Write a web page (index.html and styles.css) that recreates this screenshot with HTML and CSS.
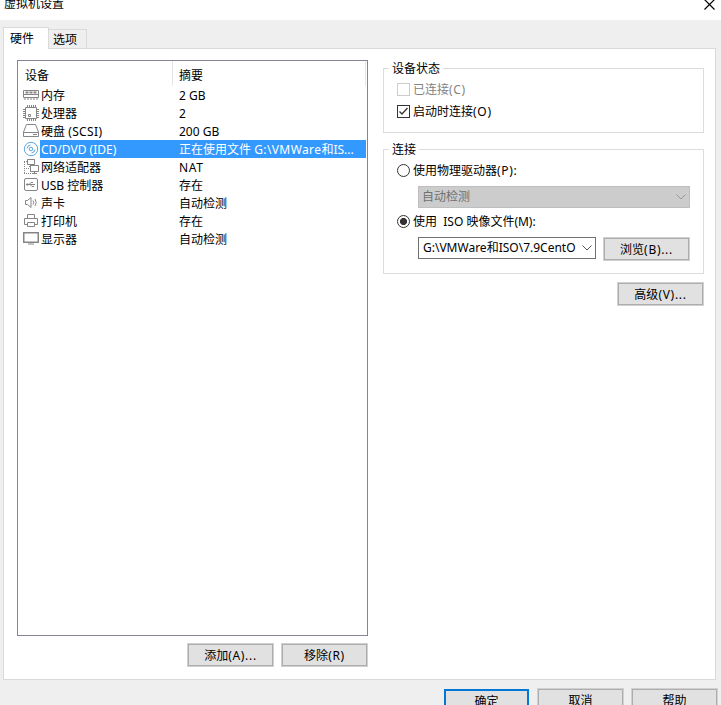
FILE: index.html
```html
<!DOCTYPE html>
<html lang="zh-CN">
<head>
  <meta charset="UTF-8" />
  <title>虚拟机设置</title>
  <link rel="stylesheet" href="styles.css">
</head>
<body>

  <header class="titlebar">
    <span class="title">虚拟机设置</span>
    <svg class="close" width="11" height="11" viewBox="0 0 11 11"><path d="M.5.5l10 10M10.500.5l-10 10" stroke="#000" stroke-width="1.2" fill="none"/></svg>
  </header>

  <nav class="tabs">
    <div class="tab active">硬件</div>
    <div class="tab">选项</div>
  </nav>

  <main class="panel">
    <section class="left">
      <div class="devices">
        <div class="row head"><span class="name">设备</span><span class="info">摘要</span></div>
        <div class="row">
          <svg class="icon" viewBox="0 0 16 16"><path d="M.5 3.500h15v7H.5zM.5 7.500h15"/><path d="M2.500 5.500h3M6.500 5.500h3M10.500 5.500h3" stroke-width="2"/><path d="M1 12h14" stroke-dasharray="2 1"/></svg>
          <span class="name">内存</span><span class="info">2 GB</span>
        </div>
        <div class="row">
          <svg class="icon" viewBox="0 0 16 16"><path d="M2.500 2.500h11v11h-11z"/><path d="M4 1h9M4 15h9M1 4v9M15 4v9" stroke-width="2" stroke-dasharray="1 1"/><path d="M5.500 9.500h2v2h-2z"/></svg>
          <span class="name">处理器</span><span class="info">2</span>
        </div>
        <div class="row">
          <svg class="icon" viewBox="0 0 16 16"><path d="M3.500 1.500h9l3 7.500v4.500H.5V9zM.500 9.500h15M10 11.500h4"/></svg>
          <span class="name">硬盘 <i class="l">(SCSI)</i></span><span class="info">200 GB</span>
        </div>
        <div class="row selected">
          <svg class="icon disc" viewBox="0 0 16 16"><circle cx="8" cy="8" r="6.700"/><circle cx="8" cy="8" r="1.800"/><path d="M4 7.500A4 4 0 0 1 7.500 4M12 8.500A4 4 0 0 1 8.500 12"/></svg>
          <span class="name">CD/DVD (IDE)</span><span class="info">正在使用文件 <i class="l">G:\VMWare</i>和IS...</span>
        </div>
        <div class="row">
          <svg class="icon" viewBox="0 0 16 16"><path d="M1.500 3v12M1 14.500h8M1 2.500h3M1 9.500h5" stroke-dasharray="1 1"/><path d="M4.500.5h7v5h-7zM6 7.500h3M7.500 5.500v2" fill="#fff"/><path d="M7.500 6.500h8v6h-8zM11.500 12.500v2M9 14.500h5" fill="#fff"/></svg>
          <span class="name">网络适配器</span><span class="info"><i class="w">NAT</i></span>
        </div>
        <div class="row">
          <svg class="icon" viewBox="0 0 16 16"><rect x="1.500" y="1.500" width="13" height="12" rx="1.500"/><path d="M4 7.500h8M6 7.500l2-2h2M7 7.500l2 2h2"/><path d="M3.500 7h2v1h-2z"/></svg>
          <span class="name">USB 控制器</span><span class="info">存在</span>
        </div>
        <div class="row">
          <svg class="icon" viewBox="0 0 16 16"><path d="M2.500 5.500h2l3.500-3v10l-3.500-3h-2zM10 5.500q1.500 2 0 4M12 4q2.500 3.500 0 7"/></svg>
          <span class="name">声卡</span><span class="info">自动检测</span>
        </div>
        <div class="row">
          <svg class="icon" viewBox="0 0 16 16"><path d="M4.500 5V1.500h7V5M4 11.500H1.500v-6h13v6H12M4.500 9.500h7v4h-7z"/></svg>
          <span class="name">打印机</span><span class="info">存在</span>
        </div>
        <div class="row">
          <svg class="icon" viewBox="0 0 16 16"><path d="M.750 1.750h14.500v9.500H.750z" stroke-width="1.500"/><path d="M5 13h6"/></svg>
          <span class="name">显示器</span><span class="info">自动检测</span>
        </div>
      </div>
      <div class="buttons">
        <button class="btn">添加<i class="w">(A)...</i></button>
        <button class="btn">移除<i class="w">(R)</i></button>
      </div>
    </section>

    <section class="right">
      <fieldset class="group status">
        <legend>设备状态</legend>
        <label class="option off"><span class="check"></span>已连接<i class="w">(C)</i></label>
        <label class="option"><span class="check"><svg width="11" height="11" viewBox="0 0 11 11"><path d="M1.500 5.500l2.500 2.500 5.500-6" fill="none" stroke="#333" stroke-width="1.300"/></svg></span>启动时连接<i class="w">(O)</i></label>
      </fieldset>

      <fieldset class="group connect">
        <legend>连接</legend>
        <label class="option"><span class="radio"></span>使用物理驱动器<i class="w">(P):</i></label>
        <div class="combo disabled">自动检测<svg width="10" height="6" viewBox="0 0 10 6"><path d="M.5.5L5 5 9.500.5"/></svg></div>
        <label class="option"><span class="radio on"></span>使用 &nbsp;ISO 映像文件(M):</label>
        <div class="line">
          <div class="combo"><span>G:\VMWare和ISO\7.9CentO</span><svg width="10" height="6" viewBox="0 0 10 6"><path d="M.5.5L5 5 9.500.5"/></svg></div>
          <button class="btn">浏览<i class="w">(B)...</i></button>
        </div>
      </fieldset>

      <button class="btn advanced">高级<i class="w">(V)...</i></button>
    </section>
  </main>

  <footer class="footer">
    <button class="btn default">确定</button>
    <button class="btn">取消</button>
    <button class="btn">帮助</button>
  </footer>

</body>
</html>
```

FILE: styles.css
```css
* {
  box-sizing: border-box;
  margin: 0;
  padding: 0;
}

html, body {
  width: 100%;
  height: 705px;
  overflow: hidden;
}

body {
  background: #efefef;
  color: #000;
  font: 12px "Noto Sans", "Noto Sans CJK SC", sans-serif;
}

i {
  font-style: normal;
}

.l {
  letter-spacing: 0.4px;
}

.w {
  letter-spacing: 0.7px;
}

.titlebar {
  display: flex;
  justify-content: space-between;
  height: 20px;
  padding: 0 6px 0 4px;
  background: #fff;
}

.title {
  height: 18px;
  margin-top: -5px;
  line-height: 18px;
}

.close {
  margin-top: -1px;
}

/* tabs */
.tabs {
  display: flex;
  align-items: flex-end;
  height: 28px;
  padding-left: 3px;
}

.tab {
  width: 38px;
  height: 19px;
  padding-left: 4px;
  line-height: 20px;
  border: 1px solid #d9d9d9;
  border-left: 0;
  border-bottom: 0;
}

.tab.active {
  position: relative;
  z-index: 1;
  width: 46px;
  height: 22px;
  margin-bottom: -1px;
  padding-left: 6px;
  line-height: 21px;
  border-left: 1px solid #d9d9d9;
  background: #fff;
}

.panel {
  display: flex;
  gap: 15px;
  width: 713px;
  height: 632px;
  margin-left: 3px;
  padding: 11px 11px 0 13px;
  border: 1px solid #d9d9d9;
  background: #fff;
}

/* device list */
.left {
  width: 351px;
}

.devices {
  height: 576px;
  padding-right: 1px;
  border: 1px solid #828790;
}

.row {
  display: flex;
  height: 18px;
  line-height: 20px;
  padding-left: 5px;
  white-space: nowrap;
}

.row.head {
  height: 25px;
  line-height: 30px;
  padding-left: 0;
  border-right: 1px solid #e5e5e5;
}

.head .name {
  width: 155px;
  padding-left: 7px;
  border-right: 1px solid #e5e5e5;
}

.icon {
  flex: none;
  width: 16px;
  height: 16px;
  margin-top: 1px;
  fill: none;
  stroke: #858585;
}

.disc {
  stroke: #5fa6d8;
}

.name {
  width: 134px;
  padding-left: 2px;
}

.info {
  flex: 1;
  padding-left: 6px;
}

.selected {
  color: #fff;
  background: linear-gradient(to right, #fff 22px, #3399ff 22px);
}

.buttons {
  display: flex;
  justify-content: flex-end;
  gap: 9px;
  margin: 8px 1px 0 0;
}

.btn {
  flex: none;
  width: 85px;
  height: 22px;
  padding-top: 1px;
  border: 1px solid #adadad;
  outline: 1px solid #d0d0d0;
  outline-offset: 0;
  background: #e1e1e1;
  color: #000;
  font: inherit;
  line-height: 20px;
}

/* right side */
.right {
  display: flex;
  flex-direction: column;
  width: 321px;
  padding-top: 1px;
}

.group {
  border: 1px solid #dcdcdc;
}

legend {
  height: 14px;
  margin-left: 5px;
  padding: 0 3px;
  line-height: 15px;
}

.status {
  height: 72px;
  padding-top: 3px;
}

.connect {
  height: 132px;
  margin-top: 9px;
  padding-top: 3px;
}

.option {
  display: flex;
  align-items: center;
  height: 22px;
  padding-left: 13px;
  white-space: pre;
}

.off {
  color: #838383;
}

.check,
.radio {
  flex: none;
  width: 13px;
  height: 13px;
  margin-right: 3px;
  border: 1px solid #333;
}

.check svg {
  display: block;
}

.off .check {
  border-color: #ccc;
}

.radio {
  border-radius: 50%;
}

.radio.on {
  background: radial-gradient(circle, #333 3.2px, #fff 3.9px);
}

.combo {
  display: flex;
  align-items: center;
  justify-content: space-between;
  width: 178px;
  height: 22px;
  padding: 0 3px 0 4px;
  border: 1px solid #707070;
  line-height: 20px;
  white-space: nowrap;
}

.combo svg {
  fill: none;
  stroke: #555;
}

.disabled {
  width: 272px;
  margin: 5px 0 2px 34px;
  padding-left: 3px;
  border-color: #bfbfbf;
  background: #ccc;
  color: #707070;
  line-height: 22px;
}

.disabled svg {
  stroke: #999;
}

.line {
  display: flex;
  gap: 8px;
  margin: 5px 0 0 34px;
}

.line .btn {
  margin-top: 1px;
}

.advanced {
  align-self: flex-end;
  margin: 9px 1px 0 0;
}

.footer {
  display: flex;
  justify-content: flex-end;
  gap: 9px;
  padding: 9px 4px 0 0;
}

.default {
  border: 2px solid #0078d7;
  outline: 0;
}
```
